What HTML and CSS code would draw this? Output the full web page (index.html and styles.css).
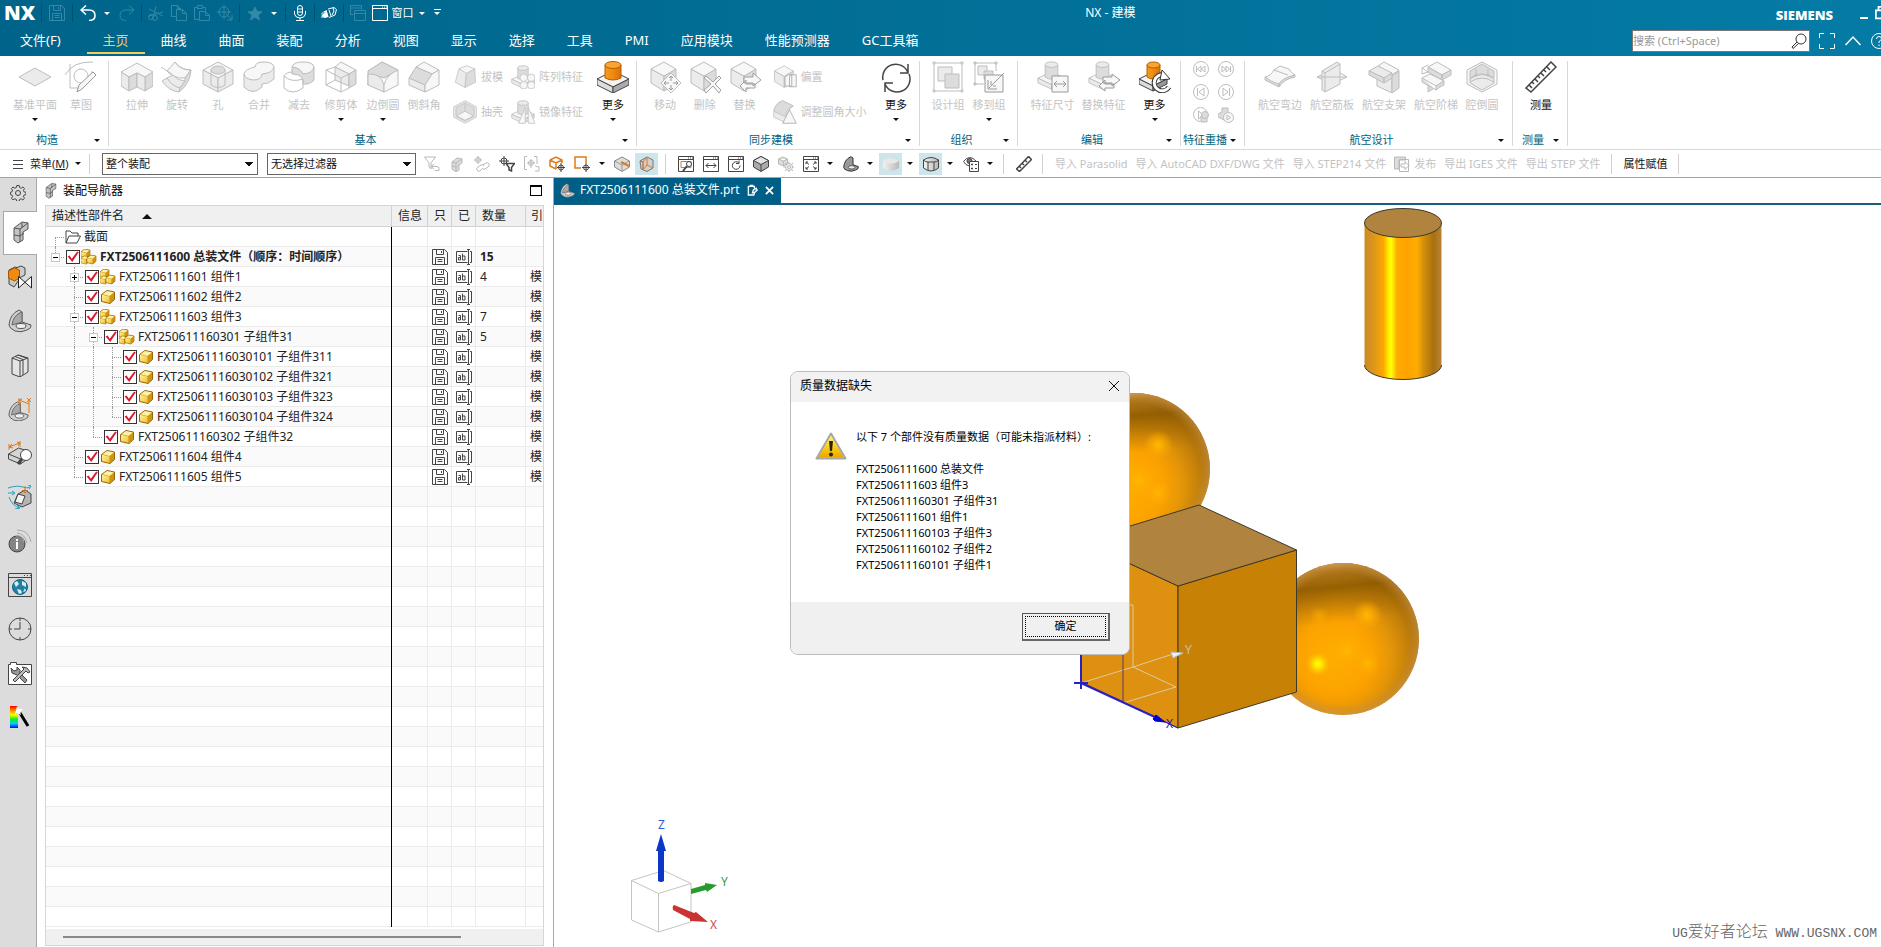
FILE: index.html
```html
<!DOCTYPE html>
<html lang="zh-CN">
<head>
<meta charset="utf-8">
<title>NX - 建模</title>
<link rel="stylesheet" href="styles.css">
</head>
<body>
<svg class="sprite" aria-hidden="true">
  <defs>
    <linearGradient id="gold" x1="0" y1="0" x2="1" y2="1"><stop offset="0" stop-color="#fff3a0"/><stop offset="1" stop-color="#f0c030"/></linearGradient>
    <linearGradient id="orange" x1="0" x2="1"><stop offset="0" stop-color="#f59a1c"/><stop offset=".5" stop-color="#f08a10"/><stop offset="1" stop-color="#d8700a"/></linearGradient>
    <linearGradient id="steel" x1="0" x2="1"><stop offset="0" stop-color="#f2f2f2"/><stop offset="1" stop-color="#b9b9b9"/></linearGradient>
  </defs>
  <symbol id="save" viewBox="0 0 16 16"><path d="M.5 .5h12l3 3v12H.5zM4.500 .5v5h7v-5M9.500 2v2M3.500 15.500v-7h9v7M5.500 10.500h5M5.500 12.500h5"/></symbol>
  <symbol id="ab" viewBox="0 0 16 16"><path d="M11.500 2.500H.5v11h11M14 2.500h1.500v11H14M12.500 1v14M11 .5h3M11 15.500h3"/><path d="M2.500 6.500h2v4.500h-2v-2.500h2M6.500 4.500V11h2.500V7H6.500"/></symbol>
  <symbol id="part" viewBox="0 0 16 16"><path d="M1.500 5.500l5.500-4 7.500 1.500v7.500l-4.500 4-8.500-2z" fill="#c98f10" stroke="#94690a"/><path d="M2 5.800l7.500 1.700v6.300L2 12z" fill="url(#gold)"/><path d="M2.500 5.300L7 2l7 1.500-4.500 3.400z" fill="#fff2a6"/><path d="M10 7.500l4-3.200v6L10 13.700z" fill="#cf9412"/></symbol>
  <symbol id="asm" viewBox="0 0 16 16"><use href="#part" x="-1" y="-1" width="11" height="11"/><use href="#part" x="-1" y="6" width="10" height="10"/><use href="#part" x="5" y="5" width="11" height="11"/></symbol>
  <symbol id="block" viewBox="0 0 32 32"><path class="m" d="M2 8v14l13 8V15z"/><path class="d" d="M15 15l12-7v15l-12 7z"/><path class="f" d="M2 8l13-7 12 7-12 7z"/></symbol>
  <symbol id="boss" viewBox="0 0 32 32"><path class="f" d="M1 19l15-7 15 7-15 7z"/><path class="m" d="M1 19v5l15 7v-5z"/><path class="d" d="M31 19v5l-15 7v-5z"/><path class="d" d="M9 4v14q6.500 4 14 0V4"/><ellipse class="m" cx="16" cy="4" rx="7" ry="3"/></symbol>
  <symbol id="bracket" viewBox="0 0 24 24"><path d="M1 16Q2 5 11 1l3 2v10l9 3q1 3-4 5-6 3-12 1-6-3-6-6z" fill="#d0d0d0" stroke="#555"/><path d="M4 16Q5 6 14 3v10z" fill="#a9a9a9" stroke="#666"/><ellipse cx="13" cy="17" rx="5" ry="2.500" fill="#efefef" stroke="#555"/></symbol>
  <symbol id="stack" viewBox="0 0 16 24"><path d="M1 8l8-6 6 1v6l-5 3v8l-5 3-4-3z" fill="#c4c4c4" stroke="#555"/><path d="M1 8l6 1v13M1 15l6 1 4-3M7 9l8-6M9 3v5" fill="none" stroke="#555"/></symbol>
  <symbol id="window" viewBox="0 0 16 16"><path d="M.5 .5h15v15H.5zM.5 3.500h15M10 2h1M12 2h1M14 2h1"/></symbol>
</svg>

<header class="top">
  <div class="titlebar">
    <div class="qat">
      <b class="logo">NX</b>
      <i class="vsep"></i>
      <button class="q dim wide" aria-label="保存"><svg viewBox="0 0 16 16"><use href="#save"/></svg></button>
      <i class="vsep"></i>
      <button class="q wide" aria-label="撤消"><svg viewBox="0 0 16 16"><path d="M6 .5L1 5l5 4.500M1 5h8q6 0 6 5.500 0 5-6 5" stroke-width="1.500"/></svg></button>
      <i class="caret"></i>
      <button class="q dim" aria-label="重做"><svg viewBox="0 0 16 16"><path d="M10 .5L15 5l-5 4.500M15 5H7q-6 0-6 5.500 0 5 6 5"/></svg></button>
      <i class="vsep"></i>
      <button class="q dim" aria-label="剪切"><svg viewBox="0 0 16 16"><path d="M1 4l14 7M1 11l14-4M6 9L8 1"/><circle cx="3" cy="12" r="2.500"/><circle cx="7" cy="13" r="2.500"/></svg></button>
      <button class="q dim" aria-label="复制"><svg viewBox="0 0 16 16"><path d="M5.500 11.500h-5v-11h6l3 3v2M6.500 .5v3h3M5.500 4.500h6l4 4v7h-10zM11.500 4.500v4h4"/></svg></button>
      <button class="q dim" aria-label="粘贴"><svg viewBox="0 0 16 16"><path d="M5.500 14.500h-5v-12h3v-2h5v2h3v3M3 3.500h6M5.500 6.500h6l4 4v5h-10zM11.500 6.500v4h4"/></svg></button>
      <button class="q dim" aria-label="捕捉"><svg viewBox="0 0 16 16"><circle cx="7" cy="7" r="5"/><path d="M7 0v14M0 7h14M9 9l6 6M15 10v5h-5"/></svg></button>
      <i class="vsep"></i>
      <button class="q dim wide" aria-label="收藏"><svg viewBox="0 0 16 16"><path fill="currentColor" d="M8 2l2 4.500 5 .5-4 3 1.500 5L8 12l-4.500 3L5 10 1 7l5-.5z"/></svg></button>
      <i class="caret"></i>
      <i class="vsep"></i>
      <button class="q" aria-label="语音"><svg viewBox="0 0 16 16"><rect x="5.500" y=".5" width="5" height="10" rx="2.500"/><path d="M2.500 6v3q1 4 5.500 4t5.500-4V6M8 13v2.500M4 15.500h8M5 4h6M5 7h6"/></svg></button>
      <i class="vsep"></i>
      <button class="q" aria-label="触控"><svg viewBox="0 0 16 16"><path d="M0 9.500l3-3h3M0 12h4l3-1M5 5l2 7M7 4l6-1.500 2.500 2L14 10l-6 2.500M8 5l2 6M12 3l1 3-2 4M1 11l5-3"/><path fill="currentColor" d="M1 10.500l4-4 2 5-3 1z"/></svg></button>
      <i class="vsep"></i>
      <button class="q dim" aria-label="层叠窗口"><svg viewBox="0 0 16 16"><path d="M3.500 9.500h-3v-9h11v4M.5 3h11M4.500 5.500h11v10h-11zM4.500 8.500h11"/></svg></button>
      <button class="q win"><svg viewBox="0 0 16 16"><use href="#window"/></svg><span>窗口</span></button>
      <i class="caret"></i>
      <i class="caret over"></i>
    </div>
    <h1>NX - 建模</h1>
    <strong class="brand">SIEMENS</strong>
    <button class="q" aria-label="最小化"><svg viewBox="0 0 16 16"><path d="M4 13h8" stroke-width="2"/></svg></button>
    <button class="q cut" aria-label="还原"><svg viewBox="0 0 16 16"><path d="M4 4V1h11v10h-3M1 5h10v9H1z" stroke-width="2"/></svg></button>
  </div>
  <nav class="tabs">
    <a href="#f" class="file">文件(F)</a><a href="#h" class="on">主页</a><a href="#1">曲线</a><a href="#2">曲面</a><a href="#3">装配</a><a href="#4">分析</a><a href="#5">视图</a><a href="#6">显示</a><a href="#7">选择</a><a href="#8">工具</a><a href="#9">PMI</a><a href="#10">应用模块</a><a href="#11">性能预测器</a><a href="#12">GC工具箱</a>
    <label class="search"><input type="text" placeholder="搜索 (Ctrl+Space)" aria-label="搜索"><svg viewBox="0 0 16 16"><circle cx="10" cy="6" r="5"/><path d="M6 9l-5 5 1 1.500 5.500-5"/></svg></label>
    <button class="q" aria-label="全屏"><svg viewBox="0 0 16 16"><path d="M.5 5V.5H5M11 .5h4.500V5M15.500 11v4.500H11M5 15.500H.5V11"/></svg></button>
    <button class="q" aria-label="最小化功能区"><svg viewBox="0 0 16 16"><path d="M.5 12L8 4l7.500 8" stroke-width="1.500"/></svg></button>
    <button class="q cut help" aria-label="帮助"><svg viewBox="0 0 16 16"><circle cx="8" cy="8" r="7.500"/><path d="M5.500 6q0-2.500 2.500-2.500T10.500 6Q10 7.500 8 8.500V10M8 11.500v1.500"/></svg></button>
  </nav>
</header>

<div class="ribbon">
  <section class="group g1">
    <div class="tools">
      <button class="big w50"><svg viewBox="0 0 32 32"><path class="m" d="M0 16l16-9 16 9-16 9z"/></svg><span>基准平面</span><i class="caret"></i></button>
      <button class="big w42"><svg viewBox="0 0 32 32"><path class="n" d="M0 14Q8 0 28 1M5 3v24M5 27h10M27 10v4"/><circle class="n" cx="16" cy="15" r="7"/><path class="f" d="M12 31l2-7 14-13 3 3-14 14z" style="stroke:#999"/></svg><span>草图</span></button>
    </div>
    <footer><span>构造</span><i class="caret"></i></footer>
  </section>
  <section class="group g2">
    <div class="tools">
      <button class="big w40"><svg viewBox="0 0 32 32"><path class="f" d="M0 11l16-9 16 9-8 5-8-4-8 4z"/><path class="m" d="M0 11v14l8 5V16z"/><path class="d" d="M8 16v14l8-4V12zM32 11v14l-8 5V16z"/><path class="m" d="M16 12v14l8 4V16z"/></svg><span>拉伸</span></button>
      <button class="big w40"><svg viewBox="0 0 32 32"><path class="m" d="M1 20l5-3q6 8 13 10l-1 4Q8 30 1 20z"/><path class="f" d="M6 10l8-9q6 8 16 8l-6 8Q13 18 6 10z"/><path class="m" d="M6 17l6-3q5 6 12 6l-5 7Q11 25 6 17z"/><path class="d" d="M30 9q-1 14-12 22l1-4 5-7v-3z"/><path class="n" d="M0 6l11 7M14 1q5 8 16 8"/></svg><span>旋转</span></button>
      <button class="big w42"><svg viewBox="0 0 32 32"><path class="f" d="M1 9l15-8 15 8-15 8z"/><path class="m" d="M1 9v14l15 8V17z"/><path class="m" d="M31 9v14l-15 8V17z"/><path class="n" d="M9 9v15M23 9v15M9 24q7 5 14 0"/><ellipse class="d" cx="16" cy="9" rx="7" ry="4"/></svg><span>孔</span></button>
      <button class="big w40"><svg viewBox="0 0 32 32"><path class="m" d="M1 13v13q9 9 18 0v-3q7 0 12-5V6"/><path class="f" d="M12 6q0-5 9-5t10 5q-1 6-12 7 0 6-9 6-8-1-9-6 1-5 11-7z"/></svg><span>合并</span></button>
      <button class="big w40"><svg viewBox="0 0 32 32"><path class="d" d="M9 6v7q12 0 11 10 7 1 11-4V6"/><path class="f" d="M9 6q1-5 11-5t11 5q-1 6-11 7-2-6-11-7z"/><path class="n" d="M1 15q2-4 9-4M1 15v12q8 8 19 0v-9Q8 22 1 15"/></svg><span>减去</span></button>
      <button class="big w44"><svg viewBox="0 0 32 32"><path class="f" d="M10 6l6-5 15 8-7 4z"/><path class="m" d="M10 6v13l14 6V13z"/><path class="d" d="M24 13l7-4v14l-7 4z"/><path class="n" d="M1 9l9-3M1 9v15l15 7V17L1 9M16 17l8-4M16 31l8-4M1 24l9-5"/></svg><span>修剪体</span><i class="caret"></i></button>
      <button class="big w40"><svg viewBox="0 0 32 32"><path class="f" d="M1 10l14-9 16 8-14 8z"/><path class="d" d="M1 10v14q0-14 16-7L31 9 15 1z"/><path class="m" d="M1 13v11l16 7V24Q14 12 1 13z"/><path class="f" d="M17 24v7l14-7V9q-12 5-14 15z"/></svg><span>边倒圆</span><i class="caret"></i></button>
      <button class="big w42"><svg viewBox="0 0 32 32"><path class="f" d="M8 6l8-5 15 8-7 4z"/><path class="d" d="M8 6L1 17l16 7 7-11z"/><path class="m" d="M1 17v7l16 7v-7z"/><path class="f" d="M17 24v7l14-7V9l-7 4z"/></svg><span>倒斜角</span></button>
      <div class="col c1">
        <button class="small"><svg viewBox="0 0 32 32"><path class="m" d="M8 5L3 23l13 7 2-20z"/><path class="d" d="M18 10l11-5 1 18-14 7z"/><path class="f" d="M8 5l10-4 11 4-11 6z"/></svg>拔模</button>
        <button class="small"><svg viewBox="0 0 32 32"><path class="m" d="M16 1l15 8v14l-15 8L1 23V9z"/><path class="d" d="M4 10l12-6 12 6v12l-12 6-12-6z"/><path class="f" d="M16 5v10L5 21l11 6 11-6-11-6"/></svg>抽壳</button>
      </div>
      <div class="col c2">
        <button class="small"><svg viewBox="0 0 32 32"><use href="#boss"/><circle class="f" cx="17" cy="17" r="5"/><circle class="f" cx="27" cy="17" r="5"/><circle class="f" cx="17" cy="27" r="5"/><circle class="f" cx="27" cy="27" r="5"/></svg>阵列特征</button>
        <button class="small"><svg viewBox="0 0 32 32"><use href="#boss"/><path class="f" d="M19 10v21h-9zM23 10v21h9z"/></svg>镜像特征</button>
      </div>
      <button class="big live w40 more"><svg viewBox="0 0 32 32"><path d="M0 18l16-8 16 8-16 8z" fill="#f3f3f3"/><path d="M0 18v6l16 8v-6z" fill="#ddd"/><path d="M32 18v6l-16 8v-6z" fill="#aaa"/><path d="M8 4v13q8 4 16 0V4" fill="url(#orange)" stroke="#b85c00"/><ellipse cx="16" cy="4" rx="8" ry="3.500" fill="#f9a630" stroke="#b85c00"/></svg><span>更多</span><i class="caret"></i></button>
    </div>
    <footer><span>基本</span><i class="caret"></i></footer>
  </section>
  <section class="group g3">
    <div class="tools">
      <button class="big w40"><svg viewBox="0 0 32 32"><use href="#block"/><path class="f" d="M22 12l10 10-10 10-10-10z"/><path class="n" d="M22 15v5M22 24v5M15 22h5M24 22h5M20 17l2-2 2 2M20 27l2 2 2-2M17 20l-2 2 2 2M27 20l2 2-2 2" style="stroke:#999"/></svg><span>移动</span></button>
      <button class="big w40"><svg viewBox="0 0 32 32"><use href="#block"/><path class="f" d="M17 15l7 6 6-6 2 2-6 6 6 6-2 3-6-7-7 7-2-3 7-6-7-6z" style="stroke:#a0a0a0"/></svg><span>删除</span></button>
      <button class="big w40"><svg viewBox="0 0 32 32"><use href="#block"/><path class="f" d="M15 16h9v-4l8 7-8 6v-3h-9zM26 23v4h-9v4l-6-6 6-6v4z" style="stroke:#a0a0a0"/></svg><span>替换</span></button>
      <div class="col c3">
        <button class="small"><svg viewBox="0 0 32 32"><use href="#block"/><path class="f" d="M16 16l4-3h5v15h-9zM22 15l3-2h6v16h-9z" style="stroke:#a0a0a0"/></svg>偏置</button>
        <button class="small"><svg viewBox="0 0 32 32"><path class="m" d="M1 17Q2 4 13 1l14 7q-9 5-10 22L1 23z"/><path class="d" d="M13 1l14 7q-9 3-11 14L1 15Q3 5 13 1z"/><path class="f" d="M22 13l9 18H13z" style="stroke:#a0a0a0"/></svg>调整圆角大小</button>
      </div>
      <button class="big live w40 sync"><svg viewBox="0 0 32 32"><path class="n" d="M3 19A13 13 0 0 1 28 12M29 13A13 13 0 0 1 5 23M28 3v9h-8M5 31v-9h8" stroke-width="1.500"/></svg><span>更多</span><i class="caret"></i></button>
    </div>
    <footer><span>同步建模</span><i class="caret"></i></footer>
  </section>
  <section class="group g4">
    <div class="tools">
      <button class="big w42"><svg viewBox="0 0 32 32"><path class="n" d="M3 2h26M3 30h26M2 3v26M30 3v26M1 1h2v2H1zM29 1h2v2h-2zM1 29h2v2H1zM29 29h2v2h-2z"/><path class="m" d="M6 6h14v14H6z"/><path class="d" d="M13 13h14v14H13z"/></svg><span>设计组</span></button>
      <button class="big w40"><svg viewBox="0 0 32 32"><path class="n" d="M1 2h22M1 23h10M2 1v22M23 2v8M1 1h2v2H1zM22 1h2v2h-2zM1 22h2v2H1z"/><path class="m" d="M5 5h9v9H5z"/><path class="d" d="M11 10h9v8h-9z"/><path class="f" d="M12 14h18v17H12z" style="stroke:#999"/><path class="n" d="M31 12L16 27M15 19v9h9M18 20v4M23 25h-3" style="stroke:#999"/></svg><span>移到组</span><i class="caret"></i></button>
    </div>
    <footer><span>组织</span><i class="caret"></i></footer>
  </section>
  <section class="group g5">
    <div class="tools">
      <button class="big w52"><svg viewBox="0 0 32 32"><use href="#boss" width="29" height="29"/><path class="f" d="M15 15h16v16H15z" style="stroke:#999"/><path class="n" d="M17 23h12M20 20l-3 3 3 3M26 20l3 3-3 3" style="stroke:#999"/></svg><span>特征尺寸</span></button>
      <button class="big w52"><svg viewBox="0 0 32 32"><use href="#boss" width="29" height="29"/><path class="f" d="M15 16h9v-3l8 6-8 6v-3h-9zM26 23v4h-9v3l-6-5 6-6v4z" style="stroke:#999"/></svg><span>替换特征</span></button>
      <button class="big live w52"><svg viewBox="0 0 32 32"><path d="M0 18l14-7 14 7-14 7z" fill="#f3f3f3"/><path d="M0 18v5l14 7v-5z" fill="#ddd"/><path d="M28 18v5l-14 7v-5z" fill="#999"/><path d="M8 4v12q6 4 13 0V4" fill="url(#orange)" stroke="#b85c00"/><ellipse cx="14.500" cy="4" rx="6.500" ry="3" fill="#f9a630" stroke="#b85c00"/><path class="n" d="M30 26a8 8 0 1 1-5-12" style="stroke:#333;stroke-width:5"/><path class="n" d="M30 26a8 8 0 1 1-5-12" style="stroke:#fff;stroke-width:3"/><path d="M23 9l8 9-10 1z" fill="#fff" stroke="#333"/></svg><span>更多</span><i class="caret"></i></button>
    </div>
    <footer><span>编辑</span><i class="caret"></i></footer>
  </section>
  <section class="group g6">
    <div class="tools replay">
      <button class="mini" aria-label="到起点"><svg viewBox="0 0 16 16"><circle cx="8" cy="8" r="7.500"/><path d="M3.500 5v6M8 5v6L4.500 8zM12 5v6L8.500 8z"/></svg></button>
      <button class="mini" aria-label="到终点"><svg viewBox="0 0 16 16"><circle cx="8" cy="8" r="7.500"/><path d="M12.500 5v6M8 5v6l3.500-3zM4 5v6l3.500-3z"/></svg></button>
      <button class="mini" aria-label="后退"><svg viewBox="0 0 16 16"><circle cx="8" cy="8" r="7.500"/><path d="M4.500 4v8M11 4v8L6 8z"/></svg></button>
      <button class="mini" aria-label="前进"><svg viewBox="0 0 16 16"><circle cx="8" cy="8" r="7.500"/><path d="M11.500 4v8M5 4v8l5-4z"/></svg></button>
      <button class="mini" aria-label="播放到块"><svg viewBox="0 0 16 16"><circle cx="7.500" cy="7.500" r="7"/><path d="M5.500 4v8l5-4z"/><path class="d" d="M8 9h6v6H8z"/><circle class="d" cx="12" cy="8" r="3.500"/></svg></button>
      <button class="mini" aria-label="播放特征"><svg viewBox="0 0 16 16"><path class="d" d="M4 1h6v5l3 2-7 5-6-3V7l4-2z"/><circle class="f" cx="10.500" cy="10.500" r="5"/><path d="M9 8v5l3.500-2.500z"/></svg></button>
    </div>
    <footer><span>特征重播</span><i class="caret"></i></footer>
  </section>
  <section class="group g7">
    <div class="tools">
      <button class="big w52"><svg viewBox="0 0 32 32"><path class="d" d="M1 16l14 7v3L1 19zM15 23q3-6 16-9v2q-11 2-16 10z"/><path class="f" d="M1 16q6-1 9-7l6-4 9 3q2 4 6 6-13 3-16 9-8-2-14-7z"/><path class="n" d="M10 9l14 5"/></svg><span>航空弯边</span></button>
      <button class="big w52"><svg viewBox="0 0 32 32"><path class="f" d="M1 16l17-8 13 8-15 7z"/><path class="m" d="M6 10L21 1l3 2v20L9 31l-3-2z"/><path class="n" d="M9 12v19M9 12l15-9M6 10l3 2M1 16l30 0"/></svg><span>航空筋板</span></button>
      <button class="big w52"><svg viewBox="0 0 32 32"><path class="m" d="M9 10v15l15 7V15z"/><path class="d" d="M24 15l7-5v17l-7 5z"/><path class="f" d="M10 5l6-4 15 8-7 5z"/><path class="m" d="M1 10l9-5 14 7-8 5z"/><path class="d" d="M1 10v4l15 8v-5zM16 17l8-5v5l-8 5z"/></svg><span>航空支架</span></button>
      <button class="big w52"><svg viewBox="0 0 32 32"><path class="f" d="M8 6l9-5 14 8-9 5z"/><path class="d" d="M8 6v5l14 8v-5zM22 14l9-5v5l-9 5z"/><path class="f" d="M2 17l8-4 14 7-8 5z"/><path class="d" d="M2 17v4l14 8v-4l8-5v4l-4 2-4 3M8 24v7l5-3"/><path class="n" d="M2 7l6-3M2 7v6l6-2M2 7l6 4"/></svg><span>航空阶梯</span></button>
      <button class="big w40"><svg viewBox="0 0 32 32"><path class="f" d="M16 1l15 8v14l-15 8L1 23V9z"/><path class="d" d="M4 10l12-7 12 7v7q-4-4-12-4T4 18z"/><path class="m" d="M4 18q12-9 24 0v4l-12 7-12-7z"/><path class="n" d="M10 8v8M22 8v8M4 21q12-8 24 0"/></svg><span>腔倒圆</span></button>
    </div>
    <footer><span>航空设计</span><i class="caret"></i></footer>
  </section>
  <section class="group g8">
    <div class="tools">
      <button class="big live w40"><svg viewBox="0 0 32 32"><path class="n" d="M1 27L26 1l5 5L6 31zM4 24l3 3M7 21l2 2M10 18l3 3M13 15l2 2M16 12l3 3M19 9l2 2M22 6l3 3" stroke-width="1.500"/></svg><span>测量</span></button>
    </div>
    <footer><span>测量</span><i class="caret"></i></footer>
  </section>
</div>

<div class="toolbar">
  <button class="menu"><svg viewBox="0 0 12 12"><path d="M1 2.500h10M1 6.500h10M1 10.500h10"/></svg><span>菜单(<u>M</u>)</span><i class="caret"></i></button>
  <i class="tsep"></i>
  <select class="s1" aria-label="选择范围"><option>整个装配</option></select>
  <select class="s2" aria-label="过滤器"><option>无选择过滤器</option></select>
  <div class="icons ia">
    <button aria-label="重置过滤器"><svg class="off" viewBox="0 0 16 16"><path d="M.5 1h11L7 7v6l-2-2V7zM10 8l-3 2.500 3 2.500M7 10.500h6q3 0 2 4h-4"/></svg></button>
    <button aria-label="部件"><svg class="off" viewBox="0 0 16 16"><path class="d" d="M3 6l5-4 5 1v4l-3 2v5l-3 2-4-3zM3 6l4 1v8M7 7l6-4M3 10l4 1 3-2"/></svg></button>
    <button aria-label="链接"><svg class="off" viewBox="0 0 16 16"><circle cx="4" cy="4" r="2.500"/><path d="M4 0v8M0 4h8M8 13l-2 2q-2 1-3-1t1-3l3-2q2-1 3 1M9 9l3-2q2-1 3 1t-1 3l-3 2q-2 1-3-1"/></svg></button>
    <button aria-label="过滤"><svg viewBox="0 0 16 16"><circle cx="5" cy="5" r="3"/><path d="M5 0v10M0 5h10"/><path fill="#fff" stroke-width="1.500" d="M7 7.500h8.500l-3 4V15l-2.500-1v-2.500z"/></svg></button>
    <button aria-label="范围"><svg class="off" viewBox="0 0 16 16"><path d="M3 .5H.5v13H3M10 .5h3V8M7 3v9M3 7h8M11 10l4 1v4h-4"/><circle cx="7" cy="7" r="2.500"/></svg></button>
    <button aria-label="实体"><svg viewBox="0 0 16 16"><path stroke="#e07a18" d="M1 4l6-3 6 3v3M1 4v6l6 3M1 4l6 3 6-3M7 7v6" stroke-width="1.500"/><circle cx="12" cy="11.500" r="2.500"/><path d="M12 7v9M8 11.500h8"/></svg></button>
    <button aria-label="矩形"><svg viewBox="0 0 16 16"><path stroke="#e07a18" d="M12 7V1H1v11h6" stroke-width="1.500"/><circle cx="12" cy="11.500" r="2.500"/><path d="M12 7v9M8 11.500h8"/></svg></button>
    <i class="caret"></i>
  </div>
  <div class="icons ib">
    <button aria-label="边"><svg viewBox="0 0 16 16"><path fill="#ddd" stroke="#888" d="M.5 5L8 1l7.500 4v6L8 15.500.5 11z"/><path stroke="#999" d="M8 9v6M.5 5L8 9l7.500-4"/><path d="M7 6l8 4" stroke="#e07a18" stroke-width="2"/></svg></button>
    <button class="hi" aria-label="隐藏边"><svg viewBox="0 0 16 16"><path fill="#d0d0d0" stroke="#777" d="M1 5l7-4 6 3v8l-6 3.500L2 13z"/><path stroke="#777" d="M1 5l3 1v8"/><path d="M8 1v8l6 3M8 1L4 6v8l4-5" stroke="#e07a18"/></svg></button>
  </div>
  <i class="tsep"></i>
  <div class="icons ic">
    <button aria-label="缩放窗口"><svg viewBox="0 0 16 16"><use href="#window"/><path stroke="#e07a18" d="M3 5.500h10v6H3z"/><circle cx="11" cy="8" r="2.500" fill="#fff"/><path d="M9 10l-4 5" stroke-width="2"/></svg></button>
    <button aria-label="适合宽度"><svg viewBox="0 0 16 16"><use href="#window"/><path d="M3 9.500h10M5.500 7L3 9.500 5.500 12M10.500 7L13 9.500 10.500 12"/></svg></button>
    <button aria-label="旋转"><svg viewBox="0 0 16 16"><use href="#window"/><path d="M10.500 6.500A3.800 3.800 0 1 0 12 9.500M11 4.500v3H8"/></svg></button>
    <button aria-label="着色"><svg viewBox="0 0 16 16"><path fill="#aaa" d="M.5 4.500L8 .5l7.500 4V11L8 15.500.5 11z"/><path fill="#e4e4e4" d="M.5 4.500L8 .5l7.500 4L8 8.500z"/><path d="M8 8.500v7"/></svg></button>
    <button aria-label="设置"><svg class="off" viewBox="0 0 16 16"><path class="d" d="M.5 3l4-2 5 2v4l-4 3-5-2zM.5 3l5 2 4-2M5.500 5v5"/><path d="M11 5.500v2M11 14.500V16M5.500 11h2M14.500 11H16M7 7l1.500 1.500M13.500 13.500L15 15M15 7l-1.500 1.500M7 15l1.500-1.500"/><circle class="f" cx="11" cy="11" r="3.500"/><circle cx="11" cy="11" r="1.500"/></svg></button>
    <button aria-label="全屏"><svg viewBox="0 0 16 16"><use href="#window"/><path d="M3 8V6h2M11 6h2v2M13 11v2h-2M5 13H3v-2M3 6l3 2.500M13 6l-3 2.500M3 13l3-2.500M13 13l-3-2.500"/></svg></button>
    <i class="caret"></i>
    <button aria-label="方位"><svg viewBox="0 0 24 24"><path d="M1 17Q2 5 12 1l3 2v10l8 3q1 3-4 5-6 3-12 1-6-2-6-5z" fill="#999" stroke="#333" stroke-width="1.500"/><ellipse cx="13" cy="17" rx="5" ry="2.500" fill="#eee" stroke="#333"/></svg></button>
    <i class="caret"></i>
    <button class="hi" aria-label="着色样式"><svg viewBox="0 0 16 16"><path d="M0 5v7q8 6 16 0V5q-8-6-16 0z" fill="url(#steel)" stroke="none"/><path d="M0 5q8-6 16 0-8 5-16 0z" fill="#e8e8e8" stroke="none"/></svg></button>
    <i class="caret"></i>
    <button class="hi" aria-label="带边着色"><svg viewBox="0 0 16 16"><path fill="url(#steel)" d="M.5 4v8q7.500 6 15 0V4q-7.500-5-15 0z"/><path d="M.5 4q2 2 4.500 2h6q3 0 4.500-2M5 6v8M11 6v8"/></svg></button>
    <i class="caret"></i>
    <button aria-label="显示"><svg viewBox="0 0 16 16"><path d="M.5 5.500q6-8 13 0M.5 5.500q2 4 6 4.500"/><circle cx="6.500" cy="5" r="2.500" fill="#777"/><path d="M6.500 5.500h9v10h-9z" fill="#fff"/><path d="M8.500 8h1v1h-1zM8.500 12h1v1h-1zM12 8.500h2M12 12.500h2"/></svg></button>
    <i class="caret"></i>
  </div>
  <i class="tsep"></i>
  <div class="icons id"><button aria-label="测量"><svg viewBox="0 0 16 16"><path d="M.5 13L12.500 .5l3 3L3.500 15.500zM3 10l2 2M6 7l2 2M9 4l2 2" stroke-width="1.500"/></svg></button></div>
  <i class="tsep"></i>
  <div class="cmds">
    <button>导入 Parasolid</button><button>导入 AutoCAD DXF/DWG 文件</button><button>导入 STEP214 文件</button>
    <button class="pub"><svg class="off" viewBox="0 0 16 16"><path class="d" d="M.5 1h11v3H5v9H.5z"/><path d="M5.500 3.500h9v12h-9zM7 8h4V5.500l4 4-4 4V11H7z"/></svg>发布</button><button>导出 IGES 文件</button><button>导出 STEP 文件</button>
  </div>
  <i class="tsep"></i>
  <button class="attr">属性赋值</button>
  <i class="tsep"></i>
</div>

<main>
  <aside class="rail">
    <button class="gear" aria-label="设置"><svg viewBox="0 0 16 16"><path d="M6.800 .5h2.400l.4 2 1.600.7 1.700-1.200 1.600 1.600-1.100 1.700.7 1.600 2 .4v2.200l-2 .5-.7 1.500 1.100 1.800-1.600 1.600-1.700-1.100-1.600.6-.4 2H6.800l-.5-2-1.500-.6-1.800 1.100-1.600-1.600 1.200-1.800-.7-1.500-1.500-.5V7.300l1.500-.4.7-1.600L1.400 3.600 3 2l1.800 1.200 1.500-.7z"/><circle cx="8" cy="8" r="2.500"/></svg></button>
    <button class="sel" aria-label="装配导航器"><svg viewBox="0 0 16 24"><use href="#stack"/></svg></button>
    <button aria-label="约束导航器"><svg viewBox="0 0 24 24"><path d="M1 5l6-3 4 1v12l-5 7-5-3z" fill="#c8c8c8"/><path d="M8 3l5-2 4 2v7l-6 3z" fill="#ccc"/><path d="M.5 6l6-3 5 2v8l-5 3-6-3z" fill="#f08a10" stroke="#a85400"/><path d="M10.500 11.500l13 11.500V11.500L10.500 23z" fill="#fff" stroke="#222"/></svg></button>
    <button aria-label="部件导航器"><svg viewBox="0 0 24 24"><use href="#bracket"/></svg></button>
    <button aria-label="重用库"><svg viewBox="0 0 24 24"><path d="M4 5l6-3 10 3v14l-8 5-8-3zM4 5l8 3v16M12 8l8-3M7 3.500l8 3V22M10 2l8 3" fill="#e4e4e4"/></svg></button>
    <button aria-label="HD3D 工具"><svg viewBox="0 0 24 24"><use href="#bracket" y="4" width="21" height="21"/><path d="M11 1v6M21 3v13M11 3l10 4M19 1l4 4M23 1l-4 4M11 3l3-1M11 3l2 3" stroke="#e07a18"/></svg></button>
    <button aria-label="测量导航器"><svg viewBox="0 0 24 24"><path d="M.5 13l10-6 12 4v5l-10 7-12-5z" fill="#d4d4d4"/><path d="M1 3v6M12 0v6M1 6l11-4M4 3L1 6l4 1M9 1l3 1-2 3" stroke="#e07a18"/><path d="M.5 13l12 5 10-7M12.500 18v5"/><circle cx="18" cy="14" r="5.500" fill="#fff"/><path d="M14 18l-4 5" stroke-width="3"/></svg></button>
    <button aria-label="仿真"><svg viewBox="0 0 24 24"><path d="M10 9l7-4 6 4v9l-9 4-8-4z" fill="#b5b5b5"/><path d="M10 9l7 2-3 8-7-2z" fill="#f2f2f2"/><path d="M0 3q9-3 15-1t8-1M20 0l3 1-2 3M0 8h6M4 6l3 2-3 2M1 12q3 9 11 11M9 20l3 3-5 1" stroke="#2a9fbd"/><path d="M17 1v7M14 5l3 3 3-3" stroke="#e07a18"/></svg></button>
    <button aria-label="通知"><svg viewBox="0 0 24 24"><circle cx="9" cy="15" r="8" fill="#858585"/><path d="M9 10v2M9 13v7" stroke="#fff" stroke-width="2"/><path d="M9 4q8 1 10 10M9 1q12 0 14 12M8 7q7-1 8 6" stroke="#aaa"/></svg></button>
    <button aria-label="浏览器"><svg viewBox="0 0 24 24"><path d="M.5 .5h23v23H.5zM.5 4.500h23M16 2.500h1M19 2.500h1M22 2.500h1"/><circle cx="12" cy="14" r="7.500" fill="#1f80a4" stroke="#17627f"/><path d="M6 10l3-2 2 3-3 3zM14 8l4 2 0 4-4-2zM9 16l4 1 1 3-3 1zM17 15l1 3-3 1z" fill="#d8eef5" stroke="none"/></svg></button>
    <button aria-label="历史记录"><svg viewBox="0 0 24 24"><circle cx="12" cy="12" r="11"/><path d="M12 5v7H6M12 1v3M12 20v3M1 12h3M20 12h3"/></svg></button>
    <button aria-label="工具"><svg viewBox="0 0 24 24"><path d="M.5 3.500h2v-2h6v2h15v20H.5z" fill="#fff"/><path d="M3 7l3 3 3-1 0-3 3 3 0 3 7 7-2 3-8-8-5-2z" fill="#999"/><path d="M14 6l5 1 3 4-2 1-2-2-11 11-2-2L16 8z" fill="#bbb"/></svg></button>
    <button aria-label="角色"><svg viewBox="0 0 24 24"><defs><linearGradient id="rain" x1="0" y1="0" x2="0" y2="1"><stop offset="0" stop-color="#f00"/><stop offset=".25" stop-color="#fa0"/><stop offset=".4" stop-color="#ff0"/><stop offset=".6" stop-color="#1e2"/><stop offset=".8" stop-color="#0cf"/><stop offset="1" stop-color="#00f"/></linearGradient></defs><path d="M2 1h8v22H2z" fill="url(#rain)" stroke="none"/><path d="M12 8l8 13" stroke="#000" stroke-width="3"/><path d="M9 1l2 3 4 0-3 3 1 3-4-2-2 1 1-4z" fill="#fff" stroke="none"/></svg></button>
  </aside>

  <section class="nav">
    <h2><svg viewBox="0 0 16 24"><use href="#stack"/></svg>装配导航器<button class="max" aria-label="最大化"></button></h2>
    <div class="grid">
      <table>
        <colgroup><col class="k1"><col class="k2"><col class="k3"><col class="k3"><col class="k4"><col></colgroup>
        <thead><tr><th>描述性部件名<i class="sort"></i></th><th>信息</th><th>只</th><th>已</th><th>数量</th><th>引</th></tr></thead>
        <tbody>
          <tr><td><div><i class="g s"></i><svg class="fold" viewBox="0 0 16 14"><path d="M1 13V1h4l2 2h6v3M1 13L4 6h11.500L12 13z"/></svg><span>截面</span></div></td><td></td><td></td><td></td><td></td><td></td></tr>
          <tr class="root"><td><div><i class="g l"><button aria-label="折叠"></button></i><input type="checkbox" checked id="c0"><svg><use href="#asm"/></svg><label for="c0">FXT2506111600 总装文件（顺序：时间顺序）</label></div></td><td></td><td><svg><use href="#save"/></svg></td><td><svg><use href="#ab"/></svg></td><td>15</td><td></td></tr>
          <tr><td><div><i class="g"></i><i class="g t"><button class="plus" aria-label="展开"></button></i><input type="checkbox" checked id="c1"><svg><use href="#asm"/></svg><label for="c1">FXT2506111601 组件1</label></div></td><td></td><td><svg><use href="#save"/></svg></td><td><svg><use href="#ab"/></svg></td><td>4</td><td>模</td></tr>
          <tr><td><div><i class="g"></i><i class="g t"></i><input type="checkbox" checked id="c2"><svg><use href="#part"/></svg><label for="c2">FXT2506111602 组件2</label></div></td><td></td><td><svg><use href="#save"/></svg></td><td><svg><use href="#ab"/></svg></td><td></td><td>模</td></tr>
          <tr><td><div><i class="g"></i><i class="g t"><button aria-label="折叠"></button></i><input type="checkbox" checked id="c3"><svg><use href="#asm"/></svg><label for="c3">FXT2506111603 组件3</label></div></td><td></td><td><svg><use href="#save"/></svg></td><td><svg><use href="#ab"/></svg></td><td>7</td><td>模</td></tr>
          <tr><td><div><i class="g"></i><i class="g v"></i><i class="g t"><button aria-label="折叠"></button></i><input type="checkbox" checked id="c4"><svg><use href="#asm"/></svg><label for="c4">FXT250611160301 子组件31</label></div></td><td></td><td><svg><use href="#save"/></svg></td><td><svg><use href="#ab"/></svg></td><td>5</td><td>模</td></tr>
          <tr><td><div><i class="g"></i><i class="g v"></i><i class="g v"></i><i class="g t"></i><input type="checkbox" checked id="c5"><svg><use href="#part"/></svg><label for="c5">FXT25061116030101 子组件311</label></div></td><td></td><td><svg><use href="#save"/></svg></td><td><svg><use href="#ab"/></svg></td><td></td><td>模</td></tr>
          <tr><td><div><i class="g"></i><i class="g v"></i><i class="g v"></i><i class="g t"></i><input type="checkbox" checked id="c6"><svg><use href="#part"/></svg><label for="c6">FXT25061116030102 子组件321</label></div></td><td></td><td><svg><use href="#save"/></svg></td><td><svg><use href="#ab"/></svg></td><td></td><td>模</td></tr>
          <tr><td><div><i class="g"></i><i class="g v"></i><i class="g v"></i><i class="g t"></i><input type="checkbox" checked id="c7"><svg><use href="#part"/></svg><label for="c7">FXT25061116030103 子组件323</label></div></td><td></td><td><svg><use href="#save"/></svg></td><td><svg><use href="#ab"/></svg></td><td></td><td>模</td></tr>
          <tr><td><div><i class="g"></i><i class="g v"></i><i class="g v"></i><i class="g l"></i><input type="checkbox" checked id="c8"><svg><use href="#part"/></svg><label for="c8">FXT25061116030104 子组件324</label></div></td><td></td><td><svg><use href="#save"/></svg></td><td><svg><use href="#ab"/></svg></td><td></td><td>模</td></tr>
          <tr><td><div><i class="g"></i><i class="g v"></i><i class="g l"></i><input type="checkbox" checked id="c9"><svg><use href="#part"/></svg><label for="c9">FXT250611160302 子组件32</label></div></td><td></td><td><svg><use href="#save"/></svg></td><td><svg><use href="#ab"/></svg></td><td></td><td>模</td></tr>
          <tr><td><div><i class="g"></i><i class="g t"></i><input type="checkbox" checked id="c10"><svg><use href="#part"/></svg><label for="c10">FXT2506111604 组件4</label></div></td><td></td><td><svg><use href="#save"/></svg></td><td><svg><use href="#ab"/></svg></td><td></td><td>模</td></tr>
          <tr><td><div><i class="g"></i><i class="g l"></i><input type="checkbox" checked id="c11"><svg><use href="#part"/></svg><label for="c11">FXT2506111605 组件5</label></div></td><td></td><td><svg><use href="#save"/></svg></td><td><svg><use href="#ab"/></svg></td><td></td><td>模</td></tr>
          <tr><td><td><td><td><td><td></tr><tr><td><td><td><td><td><td></tr><tr><td><td><td><td><td><td></tr><tr><td><td><td><td><td><td></tr>
          <tr><td><td><td><td><td><td></tr><tr><td><td><td><td><td><td></tr><tr><td><td><td><td><td><td></tr><tr><td><td><td><td><td><td></tr>
          <tr><td><td><td><td><td><td></tr><tr><td><td><td><td><td><td></tr><tr><td><td><td><td><td><td></tr><tr><td><td><td><td><td><td></tr>
          <tr><td><td><td><td><td><td></tr><tr><td><td><td><td><td><td></tr><tr><td><td><td><td><td><td></tr><tr><td><td><td><td><td><td></tr>
          <tr><td><td><td><td><td><td></tr><tr><td><td><td><td><td><td></tr><tr><td><td><td><td><td><td></tr><tr><td><td><td><td><td><td></tr>
          <tr><td><td><td><td><td><td></tr><tr><td><td><td><td><td><td></tr>
        </tbody>
      </table>
    </div>
    <div class="hscroll"><i></i></div>
  </section>

  <section class="work">
    <div class="doctabs">
      <div class="doctab"><svg viewBox="0 0 24 24"><use href="#bracket"/></svg><span>FXT2506111600 总装文件.prt</span><svg class="w" viewBox="0 0 12 12"><path d="M8 11.500H1.500V2H8v2M3 1h4M8 11V9M6 9l1-3 3-2 1 2-3 3z" stroke-width="1.500"/></svg><button aria-label="关闭"><svg class="w" viewBox="0 0 10 10"><path d="M1 1l8 8M9 1L1 9" stroke-width="2"/></svg></button></div>
    </div>
    <div class="viewport">
      <svg class="scene" viewBox="554 205 1327 742" preserveAspectRatio="xMinYMin slice">
        <defs>
          <linearGradient id="cyl"><stop offset="0" stop-color="#c78a25"/><stop offset=".12" stop-color="#dc961a"/><stop offset=".25" stop-color="#ffa800"/><stop offset=".31" stop-color="#ffee00"/><stop offset=".35" stop-color="#ffff00"/><stop offset=".42" stop-color="#ffac00"/><stop offset=".56" stop-color="#ffa200"/><stop offset=".68" stop-color="#ffae00"/><stop offset=".78" stop-color="#d08a0c"/><stop offset=".9" stop-color="#a87010"/><stop offset="1" stop-color="#b98335"/></linearGradient>
          <radialGradient id="ball" cx=".46" cy=".62" r=".62" fx=".44" fy=".62"><stop offset="0" stop-color="#ffae00"/><stop offset=".4" stop-color="#fca200"/><stop offset=".6" stop-color="#e29408"/><stop offset=".8" stop-color="#bd7c0a"/><stop offset="1" stop-color="#9a6308"/></radialGradient>
          <linearGradient id="shade" x1=".4" y1="0" x2=".5" y2="1"><stop offset="0" stop-color="#d8a868" stop-opacity=".9"/><stop offset=".05" stop-color="#b27a20" stop-opacity=".7"/><stop offset=".16" stop-color="#8a5800" stop-opacity=".8"/><stop offset=".4" stop-color="#a86c00" stop-opacity="0"/><stop offset="1" stop-color="#a86c00" stop-opacity="0"/></linearGradient>
          <radialGradient id="rim" cx=".5" cy=".5" r=".5"><stop offset=".86" stop-color="#c08a3c" stop-opacity="0"/><stop offset="1" stop-color="#cc9650" stop-opacity=".6"/></radialGradient>
          <radialGradient id="spot"><stop offset="0" stop-color="#ffb800"/><stop offset=".3" stop-color="#ffb000" stop-opacity=".8"/><stop offset="1" stop-color="#ffa800" stop-opacity="0"/></radialGradient>
          <radialGradient id="glow"><stop offset="0" stop-color="#ffff00"/><stop offset=".3" stop-color="#ffe600"/><stop offset="1" stop-color="#ffb000" stop-opacity="0"/></radialGradient>
        </defs>
        <path d="M1364.500 223v142a38.500 14.500 0 0 0 77 0V223z" fill="url(#cyl)"/>
        <path d="M1364.500 365a38.500 14.500 0 0 0 77 0" fill="none" class="edge"/>
        <ellipse cx="1403" cy="223" rx="38.500" ry="14.500" fill="#b0843f" class="edge"/>
        <g id="sphere">
          <circle cx="1134" cy="469" r="76" fill="url(#ball)"/><circle cx="1134" cy="469" r="76" fill="url(#shade)"/><circle cx="1134" cy="469" r="76" fill="url(#rim)"/>
          <circle cx="1158" cy="445" r="15" fill="url(#spot)"/><circle cx="1110" cy="446" r="10" fill="url(#spot)" opacity=".5"/><circle cx="1138" cy="480" r="20" fill="url(#spot)"/><circle cx="1158" cy="493" r="13" fill="url(#spot)"/><circle cx="1109" cy="494" r="13" fill="url(#glow)"/>
        </g>
        <use href="#sphere" x="209" y="170"/>
        <path d="M1081 541l97 45v142l-97-46z" fill="#de9010" class="edge"/>
        <path d="M1178 586l118.500-36v142l-118.500 36z" fill="#c78206" class="edge"/>
        <path d="M1199 505l97.500 45-118.500 36-97-45z" fill="#b0843f" class="edge"/>
        <path d="M1081 605h52v62l43 20-53 16M1081 683l52-16 40-13" fill="none" stroke="#dccaa4"/>
        <path d="M1171 652l12 1-10 5z" fill="#eee" stroke="#bbb"/>
        <path d="M1123 640v63" stroke="#5a3a68"/>
        <path d="M1081 640v49M1074 683h14M1081 683l76 35" stroke="#2a20c8" stroke-width="2" fill="none"/>
        <path d="M1157 718l21 10" stroke="#2a20c8"/>
        <path d="M1153 719l3-4 9 7-10-1z" fill="#0000cc" stroke="#0000cc"/>
        <text x="1185" y="654" fill="#c9c0ae">Y</text><text x="1166" y="728" fill="#1c18b8">X</text>
        <g fill="none" stroke="#c4c4c4"><path d="M631.500 880.500l32-10 27.500 13-32.500 10zM631.500 880.500V920l27 12 32.500-10v-39M658.500 893v39"/></g>
        <path d="M658 881v-30h-2l5-17 5 17h-2v30q-3 2-6 0z" fill="#0a37c6"/>
        <path d="M691 889l14-4v-2l12 2-10 7-1-2-15 4z" fill="#2b9a2e"/>
        <path d="M674 905l20 8 2-1 12 10-18-1 0-2-17-9q-1-4 1-5z" fill="#c93432"/>
        <text x="658" y="829" fill="#2f5bd8">Z</text><text x="721" y="886" fill="#359a38">Y</text><text x="710" y="929" fill="#d04a48">X</text>
      </svg>
      <section class="dialog" role="dialog" aria-labelledby="dt">
        <header><h3 id="dt">质量数据缺失</h3><button aria-label="关闭"><svg viewBox="0 0 10 10"><path d="M0 0l10 10M10 0L0 10"/></svg></button></header>
        <div class="msg">
          <svg viewBox="0 0 32 28"><defs><linearGradient id="warn" x1="0" y1="0" x2="0" y2="1"><stop offset="0" stop-color="#fff27a"/><stop offset=".5" stop-color="#fbd414"/><stop offset="1" stop-color="#eca800"/></linearGradient></defs><path d="M16 1.500L30.500 26.500h-29z" fill="#bbb" stroke="#a6a6a6" stroke-width="2" stroke-linejoin="round"/><path d="M16 3.500L28.500 25h-25z" fill="url(#warn)"/><path d="M14 9h4l-1 10h-2z" fill="#2a2408"/><circle cx="16" cy="22.500" r="2" fill="#2a2408"/></svg>
          <div><p>以下 7 个部件没有质量数据（可能未指派材料）:</p>
          <ul><li>FXT2506111600 总装文件</li><li>FXT2506111603 组件3</li><li>FXT250611160301 子组件31</li><li>FXT2506111601 组件1</li><li>FXT250611160103 子组件3</li><li>FXT250611160102 子组件2</li><li>FXT250611160101 子组件1</li></ul></div>
        </div>
        <footer><button class="ok"><span>确定</span></button></footer>
      </section>
      <p class="mark"><span>UG</span>爱好者论坛<span> WWW.UGSNX.COM</span></p>
    </div>
  </section>
</main>
</body>
</html>
```
FILE: styles.css
```css
* { box-sizing: border-box; }
html, body { height: 100%; margin: 0; overflow: hidden; }
body {
  display: flex; flex-direction: column; background: #fff; color: #222;
  font: 11px/14px "Noto Sans", "Noto Sans CJK SC", sans-serif;
}
button { font: inherit; color: inherit; background: none; border: 0; padding: 0; }
h1, h2, h3, p, ul { margin: 0; padding: 0; font-weight: 400; list-style: none; }
a { color: inherit; text-decoration: none; }
svg { fill: none; stroke: #444; flex: none; display: block; }
i { font-style: normal; flex: none; }
.sprite { position: absolute; width: 0; height: 0; }
.caret { width: 0; height: 0; border: 3px solid transparent; border-top-color: currentColor; border-bottom: 0; }

/* title bar and tabs */
.top { height: 56px; flex: none; color: #fff; background: linear-gradient(90deg, #00648a, #047ba5); overflow: hidden; }
.top svg { width: 16px; height: 16px; stroke: currentColor; }
.titlebar { display: flex; align-items: center; height: 26px; }
.qat { display: flex; align-items: center; gap: 1px; padding-left: 4px; }
.logo { width: 34px; font: 800 20px/22px "Open Sans", "Noto Sans", sans-serif; }
.vsep { width: 1px; height: 18px; margin: 0 2px; background: #00506f; }
.q { display: flex; justify-content: center; align-items: center; width: 22px; height: 22px; flex: none; }
.qat .wide { width: 24px; }
.qat .caret { margin: 0 5px 0 3px; }
.dim { color: #3489a9; }
.qat .win { width: 45px; gap: 4px; }
.over { position: relative; }
.over::before { content: ""; position: absolute; left: -3px; top: -6px; width: 7px; height: 1px; background: #fff; }
.titlebar h1 { flex: 1; text-align: center; font-size: 12px; line-height: 16px; }
.brand { font: 800 13px/16px "Open Sans", "Noto Sans", sans-serif; margin: 3px 20px 0 0; }
.cut { justify-content: flex-start; overflow: hidden; }
.titlebar .cut { width: 6px; }
.titlebar .cut svg { width: 14px; height: 14px; }
.tabs { display: flex; height: 28px; align-items: flex-start; font-size: 13px; padding-top: 1px; }
.tabs a { padding: 0 16px; height: 27px; line-height: 27px; border-bottom: 2px solid transparent; white-space: nowrap; }
.tabs .file { padding: 0 26px 0 20px; }
.tabs .on { color: #f0cf60; border-color: #f0cf60; }
.search { display: flex; align-items: center; margin: 3px 4px 0 auto; width: 178px; height: 22px; background: #fff; border: 1px solid #777; }
.search input { flex: 1; min-width: 0; border: 0; padding: 0; background: none; font: inherit; font-size: 11px; }
.search input::placeholder { color: #999; opacity: 1; }
.search svg { stroke: #333; margin-right: 2px; }
.tabs .q { margin-top: 3px; width: 26px; }
.tabs .help { width: 10px; margin-left: 5px; }

/* ribbon */
.ribbon { display: flex; flex: none; height: 94px; padding: 5px 0 3px; border-bottom: 1px solid #d8d8d8; color: #c4c4c4; }
.group { display: flex; flex-direction: column; border-right: 1px solid #d8d8d8; flex: none; }
.tools { display: flex; flex: 1; }
.group footer { display: flex; align-items: center; height: 12px; line-height: 12px; color: #111; padding-right: 8px; }
.group footer span { flex: 1; text-align: center; color: #005f80; white-space: nowrap; }
.ribbon svg { stroke: #bdbdbd; }
.f { fill: #f7f7f7; } .m { fill: #ebebeb; } .d { fill: #dcdcdc; } .n { fill: none; }
.big { display: flex; flex-direction: column; align-items: center; align-self: flex-start; }
.big svg { width: 32px; height: 32px; }
.big span { margin-top: 5px; white-space: nowrap; }
.big .caret { margin-top: 6px; color: #111; }
.ribbon .live { color: #111; }
.ribbon .live svg { stroke: #444; }
.w40 { width: 40px; } .w42 { width: 42px; } .w44 { width: 44px; } .w50 { width: 50px; } .w52 { width: 52px; }
.g1 { width: 109px; } .g1 .tools { padding-left: 10px; }
.g2 { width: 528px; } .g2 .tools { padding-left: 8px; }
.g3 { width: 283px; } .g3 .tools { padding-left: 8px; }
.g4 { width: 98px; } .g4 .tools { padding-left: 7px; }
.g5 { width: 163px; } .g5 .tools { padding-left: 9px; }
.g6 { width: 64px; }
.g7 { width: 268px; } .g7 .tools { padding-left: 9px; }
.g8 { width: 55px; } .g8 .tools { padding-left: 8px; }
.col { display: flex; flex-direction: column; gap: 11px; padding-top: 4px; margin-left: 8px; }
.c1 { width: 58px; } .c2 { width: 78px; margin-left: 0; }
.c3 { width: 104px; }
.small { display: flex; align-items: center; gap: 4px; white-space: nowrap; }
.small svg { width: 24px; height: 24px; }
.more { margin-left: 4px; }
.sync { margin-left: auto; margin-right: 3px; }
.g6 .replay { display: grid; grid-template-columns: 16px 16px; gap: 7px 9px; padding-left: 12px; align-content: start; }
.mini svg { width: 16px; height: 16px; }
.g6 footer { padding-left: 1px; gap: 2px; }

/* selection toolbar */
.toolbar { display: flex; flex: none; align-items: center; height: 28px; border-bottom: 1px solid #a3a3a3; padding-left: 12px; white-space: nowrap; }
.toolbar .caret { color: #111; }
.toolbar svg { width: 16px; height: 16px; }
.menu { display: flex; align-items: center; gap: 6px; width: 77px; }
.menu svg { width: 12px; height: 12px; }
.tsep { width: 1px; height: 20px; background: #d2d2d2; }
select {
  font: inherit; color: #111; height: 22px; border: 1px solid #666; border-radius: 0; appearance: none; padding: 0 3px;
  background: linear-gradient(45deg, transparent 50%, #111 50%) right 8px center / 4px 4px no-repeat, linear-gradient(-45deg, transparent 50%, #111 50%) right 4px center / 4px 4px no-repeat, #fff;
}
.s1 { width: 156px; margin-left: 12px; }
.s2 { width: 149px; margin-left: 9px; }
.icons { display: flex; align-items: center; gap: 9px; }
.ia { margin-left: 8px; }
.ib { margin: 0 7px 0 9px; gap: 5px; }
.ic { margin: 0 9px 0 12px; }
.id { margin: 0 10px 0 12px; }
.ic .caret { margin: 0 1px 0 -1px; }
.hi { display: grid; place-items: center; width: 23px; height: 22px; background: #cde5eb; }
.ic .hi { margin: 0 -3px 0 -4px; }
.toolbar .off { stroke: #b8b8b8; }
.cmds { display: flex; color: #c2c2c2; gap: 8px; margin: 0 10px 0 12px; }
.pub { display: flex; align-items: center; gap: 4px; }
.attr { margin: 0 10px 0 12px; color: #111; }

/* resource bar */
main { display: flex; flex: 1; min-height: 0; }
.rail { width: 37px; flex: none; background: #dcdcdc; border-right: 1px solid #a8a8a8; }
.rail button { display: flex; justify-content: center; align-items: center; height: 44px; width: 36px; padding-left: 4px; }
.rail svg { width: 24px; height: 24px; }
.rail .gear { height: 33px; padding: 0 0 3px; }
.rail .gear svg { width: 16px; height: 16px; }
.rail .sel { width: 34px; margin-left: 3px; background: #fff; border: 1px solid #a8a8a8; border-right: 0; padding: 0 0 2px; }

/* navigator */
.nav { width: 516px; flex: none; display: flex; flex-direction: column; padding: 0 9px 1px 8px; font-size: 12px; }
.nav h2 { display: flex; align-items: center; height: 27px; flex: none; font-size: 12px; color: #000; padding-bottom: 2px; }
.nav h2 svg { width: 12px; height: 17px; margin-right: 6px; }
.max { width: 12px; height: 11px; border: 1px solid #000; border-top-width: 2px; margin-left: auto; margin-right: 2px; }
.grid { flex: 1; min-height: 0; overflow: hidden; border: 1px solid #d6d6d6; border-bottom: 0; }
table { border-collapse: separate; border-spacing: 0; table-layout: fixed; width: 100%; }
.k1 { width: 346px; } .k2 { width: 36px; } .k3 { width: 24px; } .k4 { width: 50px; }
th { height: 21px; padding: 0 4px 0 6px; font-weight: 400; text-align: left; background: #f0f0f0; border-right: 1px solid #d2d2d2; border-bottom: 1px solid #d2d2d2; line-height: 18px; white-space: nowrap; }
th:last-child { padding-right: 0; padding-left: 5px; }
.sort { display: inline-block; border: 5px solid transparent; border-bottom-color: #111; border-top: 0; margin-left: 18px; vertical-align: 1px; }
td { height: 20px; padding: 0 0 1px 4px; border-right: 1px solid #ebebeb; box-shadow: inset 0 -1px #ebebeb; line-height: 18px; white-space: nowrap; }
td:first-child { padding: 0 0 1px; border-right: 1px solid #000; }
th:last-child, td:last-child { border-right: 0; }
tbody tr:nth-child(even) { background: #fafafa; }
td > svg { width: 16px; height: 16px; }
td div { display: flex; align-items: center; height: 19px; line-height: 18px; }
td div svg { width: 16px; height: 16px; margin: 0 3px 0 1px; stroke: none; }
td .fold { stroke: #444; height: 14px; margin-left: 0; }
.root { font-weight: 700; }
.g { position: relative; width: 19px; height: 20px; margin-top: 1px; display: grid; place-items: center; }
.g::before, .g::after { content: ""; position: absolute; left: 9px; }
.v::before, .t::before { top: 0; height: 20px; border-left: 1px dotted #999; }
.l::before { top: 0; height: 10px; border-left: 1px dotted #999; }
.s::before { top: 10px; height: 10px; border-left: 1px dotted #999; }
.t::after, .l::after, .s::after { top: 10px; width: 9px; border-top: 1px dotted #999; }
.g button { position: relative; z-index: 1; width: 9px; height: 9px; border: 1px solid #c8c8c8; background: linear-gradient(#000, #000) center / 5px 1px no-repeat, #fff; }
.g .plus { background: linear-gradient(#000, #000) center / 5px 1px no-repeat, linear-gradient(#000, #000) center / 1px 5px no-repeat, #fff; }
input[type="checkbox"] { appearance: none; flex: none; width: 14px; height: 14px; margin: 0 0 0 1px; border: 1px solid #333; background: #fff; }
input[type="checkbox"]:checked::before { content: ""; display: block; width: 12px; height: 12px; background: #dc1730; clip-path: polygon(5% 50%, 22% 42%, 40% 68%, 85% 8%, 98% 14%, 44% 95%); }
.hscroll { height: 17px; flex: none; border: 1px solid #d6d6d6; border-top: 0; background: #f0f0f0; padding: 7px 0 0 17px; }
.hscroll i { display: block; width: 83%; height: 2px; background: #888; }

/* graphics window */
.work { flex: 1; min-width: 0; display: flex; flex-direction: column; border-left: 1px solid #a8a8a8; }
.doctabs { height: 27px; flex: none; border-bottom: 2px solid #1c5d7d; }
.doctab { display: flex; align-items: center; width: 227px; height: 26px; background: #005f87; color: #fff; font-size: 12px; padding: 0 0 2px 6px; white-space: nowrap; }
.doctab svg { width: 15px; height: 15px; margin-right: 5px; }
.doctab .w { stroke: #fff; width: 11px; height: 12px; margin: 0 0 0 7px; }
.doctab button .w { width: 9px; height: 9px; }
.viewport { position: relative; flex: 1; min-height: 0; overflow: hidden; }
.scene { position: absolute; inset: 0; width: 100%; height: 100%; stroke: none; }
.scene .edge { stroke: #3d382c; }
.scene text { font: 12px "Noto Sans", sans-serif; }
.mark { position: absolute; right: 4px; bottom: 4px; font: 300 16px/18px "Noto Sans CJK SC", sans-serif; color: #666; white-space: pre; }
.mark span { font: 13px/18px "Liberation Mono", monospace; }

/* message box */
.dialog { position: absolute; left: 236px; top: 166px; width: 340px; background: #fff; border: 1px solid #bcbcbc; border-radius: 8px; overflow: hidden; color: #000; }
.dialog header { display: flex; justify-content: space-between; align-items: center; height: 30px; padding: 0 10px 2px 9px; background: #f2f2f2; }
.dialog h3 { font-size: 12px; }
.dialog header svg { width: 10px; height: 10px; stroke: #111; }
.msg { display: flex; gap: 9px; height: 200px; padding: 27px 0 0 24px; line-height: 16px; }
.msg svg { width: 32px; height: 28px; margin-top: 3px; stroke: none; }
.msg p { margin-bottom: 16px; white-space: nowrap; }
.dialog footer { display: flex; justify-content: flex-end; background: #f0f0f0; padding: 11px 19px 13px; }
.ok { width: 88px; height: 28px; border: 1px solid #555; border-right: 2px solid #666; border-bottom: 2px solid #666; padding: 2px; }
.ok span { display: block; height: 21px; line-height: 17px; border: 1px dotted #000; }
```
